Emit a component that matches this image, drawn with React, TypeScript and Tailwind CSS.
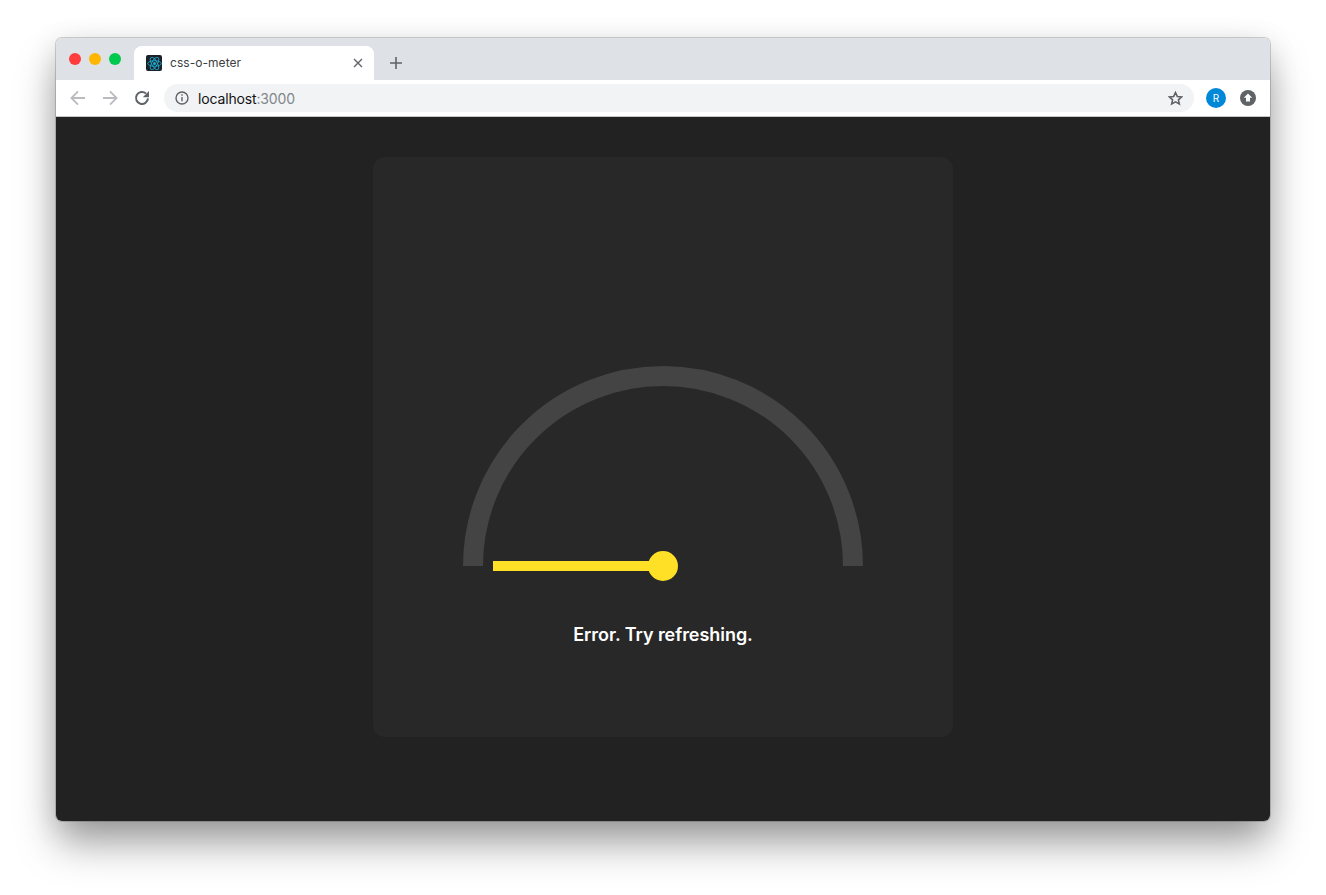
import React from "react";

function ReactLogo() {
  return (
    <div className="w-4 h-4 rounded-[2px] bg-[#1c2127] flex items-center justify-center">
      <svg width="15" height="15" viewBox="-12 -12 24 24" fill="none" stroke="#1fa9cf" strokeWidth="1.5">
        <circle r="2.4" fill="#1fa9cf" stroke="none" />
        <ellipse rx="10.8" ry="4.4" />
        <ellipse rx="10.8" ry="4.4" transform="rotate(60)" />
        <ellipse rx="10.8" ry="4.4" transform="rotate(120)" />
      </svg>
    </div>
  );
}

function Arrow({ flip }: { flip?: boolean }) {
  return (
    <svg width="16" height="16" viewBox="0 0 16 16" fill="none" stroke="#b9bbbe" strokeWidth="1.8" className={flip ? "rotate-180" : ""}>
      <path d="M15 8H1.6M8 1.4L1.4 8 8 14.6" />
    </svg>
  );
}

export default function App() {
  return (
    <div className="h-[895px] w-[1326px] bg-white pt-[38px] pl-[56px] overflow-hidden font-['Inter',sans-serif]">
      <div className="w-[1214px] h-[783px] rounded-[6px] overflow-hidden flex flex-col shadow-[0_24px_42px_-2px_rgba(0,0,0,0.36),0_6px_30px_rgba(0,0,0,0.12),0_0_0_1px_rgba(0,0,0,0.17)]">
        {/* tab strip */}
        <div className="h-[42px] bg-[#dee1e6] flex items-end shrink-0">
          <div className="flex items-start gap-2 w-[78px] h-full pl-[13px] pt-[15px] shrink-0">
            <span className="w-3 h-3 rounded-full bg-[#ff3d3d]" />
            <span className="w-3 h-3 rounded-full bg-[#ffb600]" />
            <span className="w-3 h-3 rounded-full bg-[#00ca4e]" />
          </div>
          <div className="w-[240px] h-[34px] bg-white rounded-t-[8px] flex items-center pl-3 pr-[10px] shrink-0 relative">
            <ReactLogo />
            <span className="ml-2 text-[12px] text-[#3c4043] tracking-[0.05px]">
              css-o-meter
            </span>
            <svg width="10" height="10" viewBox="0 0 10 10" stroke="#5f6368" strokeWidth="1.4" className="ml-auto mr-[1px]">
              <path d="M1 1l8 8M9 1l-8 8" />
            </svg>
          </div>
          <div className="h-[34px] flex items-center ml-[15px]">
            <svg width="14" height="14" viewBox="0 0 14 14" stroke="#5f6368" strokeWidth="1.6">
              <path d="M7 1v12M1 7h12" />
            </svg>
          </div>
        </div>
        {/* toolbar */}
        <div className="h-[37px] bg-white border-b border-[#c4c6c9] flex items-center shrink-0 pl-[14px] pr-[14px]">
          <Arrow />
          <div className="ml-4"><Arrow flip /></div>
          <svg width="16" height="16" viewBox="0 0 16 16" fill="none" stroke="#5f6368" strokeWidth="2" className="ml-4">
            <path d="M14 8.4A6 6 0 1 1 12 3.5" />
            <path d="M15 1v6.2H8.8z" fill="#5f6368" stroke="none" />
          </svg>
          <div className="ml-[14px] h-7 w-[1030px] rounded-full bg-[#f1f3f4] flex items-center pl-[11px] pr-[11px]">
            <svg width="14" height="14" viewBox="0 0 14 14" fill="none" stroke="#5f6368" strokeWidth="1.4">
              <circle cx="7" cy="7" r="6" />
              <path d="M7 6v4.2M7 3.2v1.5" />
            </svg>
            <span className="ml-[9px] text-[14px] text-[#111214] tracking-[-0.15px]">
              localhost<span className="text-[#80868b]">:3000</span>
            </span>
            <svg width="15" height="15" viewBox="0 0 16 16" fill="none" stroke="#5f6368" strokeWidth="1.7" className="ml-auto">
              <path d="M8 1.6l1.9 4.2 4.6.5-3.4 3.1 1 4.5L8 11.6l-4.1 2.3 1-4.5L1.5 6.3l4.6-.5z" />
            </svg>
          </div>
          <div className="ml-3 w-5 h-5 rounded-full bg-[#0088d8] flex items-center justify-center text-[10px] text-white">
            R
          </div>
          <svg width="16" height="16" viewBox="0 0 16 16" className="ml-[14px]">
            <circle cx="8" cy="8" r="8" fill="#5f6368" />
            <path d="M8 3.4l4.2 4.4H10v3.6H6V7.8H3.8z" fill="#fff" />
          </svg>
        </div>
        {/* page */}
        <div className="flex-1 bg-[#222222] flex justify-center pt-10 pr-[1px]">
          <div className="w-[580px] h-[580px] bg-[#282828] rounded-xl flex flex-col items-center pt-[209px]">
            <div className="relative w-[400px] h-[200px]">
              <svg width="400" height="200" viewBox="0 0 400 200" fill="none">
                <path d="M10 200a190 190 0 0 1 380 0" stroke="#444444" strokeWidth="20" />
              </svg>
              <div className="absolute left-[30px] top-[195px] w-[175px] h-[10px] bg-[#ffe026]" />
              <div className="absolute left-[185px] top-[185px] w-[30px] h-[30px] rounded-full bg-[#ffe026]" />
            </div>
            <div className="mt-[57px] text-[18px] leading-6 font-semibold text-white tracking-[-0.05px] pl-[1px]">Error. Try refreshing.</div>
          </div>
        </div>
      </div>
    </div>
  );
}
